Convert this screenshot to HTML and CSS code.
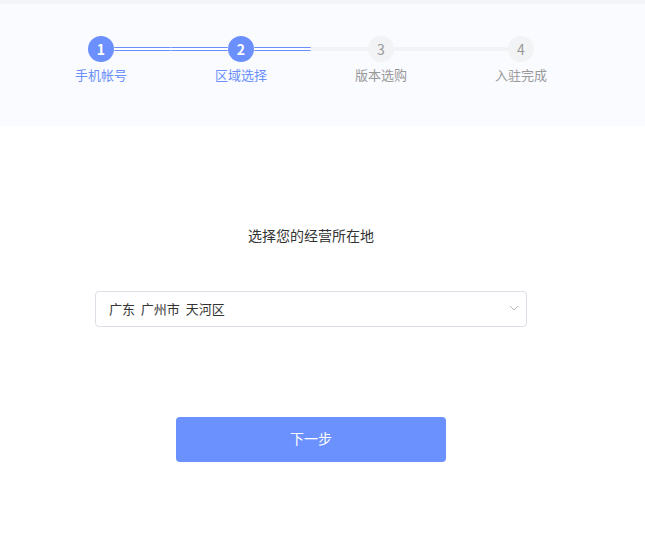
FILE: index.html
```html
<!DOCTYPE html>
<html lang="zh-CN">
<head>
    <meta charset="UTF-8">
    <meta name="viewport" content="width=device-width, initial-scale=1.0">
    <title>商家入驻</title>
    <link rel="stylesheet" href="styles.css">
</head>
<body>
    <header class="steps-bar">
        <div class="steps">
            <div class="step active">
                <div class="track"><span class="bar hidden"></span><span class="dot">1</span><span class="bar"></span></div>
                <div class="label">手机帐号</div>
            </div>
            <div class="step active">
                <div class="track"><span class="bar"></span><span class="dot">2</span><span class="bar"></span></div>
                <div class="label">区域选择</div>
            </div>
            <div class="step">
                <div class="track"><span class="bar"></span><span class="dot">3</span><span class="bar"></span></div>
                <div class="label">版本选购</div>
            </div>
            <div class="step">
                <div class="track"><span class="bar"></span><span class="dot">4</span><span class="bar hidden"></span></div>
                <div class="label">入驻完成</div>
            </div>
        </div>
    </header>

    <main class="content">
        <p class="title">选择您的经营所在地</p>
        <div class="select">
            <span class="select-value">广东&nbsp; 广州市&nbsp; 天河区</span>
            <svg class="arrow" width="10" height="6" viewBox="0 0 10 6">
                <path d="M1 1 L5 5 L9 1" fill="none" stroke="#b4b8c0" stroke-width="1"/>
            </svg>
        </div>
        <button class="btn-next">下一步</button>
    </main>
</body>
</html>
```

FILE: styles.css
```css
body {
    margin: 0;
    padding: 0;
    background: #fff;
    font-family: "Noto Sans CJK SC", "Noto Sans", sans-serif;
    color: #333;
}
.steps-bar {
    background: #f9fbff;
    border-top: 4px solid #f4f5f8;
    height: 126px;
    box-sizing: border-box;
    padding-top: 31px;
}
.steps {
    width: 622px;
    display: flex;
    justify-content: center;
}
.step {
    width: 140px;
    display: flex;
    flex-direction: column;
    align-items: center;
}
.track {
    width: 100%;
    height: 26px;
    display: flex;
    align-items: center;
    margin-top: 1px;
}
.bar {
    flex: 1;
    height: 4px;
    background: #f2f3f5;
}
.step.active .bar {
    background: #fff;
    border-top: 1px solid #6b8ffc;
    border-bottom: 1px solid #6b8ffc;
    height: 2px;
    border-radius: 1px;
}
.bar.hidden {
    visibility: hidden;
}
.dot {
    width: 26px;
    height: 26px;
    border-radius: 50%;
    background: #f2f3f5;
    color: #999;
    font-size: 14px;
    line-height: 26px;
    text-align: center;
}
.step.active .dot {
    background: #6b8ffc;
    color: #fff;
    font-weight: bold;
}
.label {
    margin-top: 4px;
    font-size: 13px;
    line-height: 18px;
    color: #999;
}
.step.active .label {
    color: #6b8ffc;
}
.content {
    width: 622px;
    display: flex;
    flex-direction: column;
    align-items: center;
}
.title {
    margin: 99px 0 0;
    font-size: 14px;
    line-height: 20px;
    color: #333;
}
.select {
    margin-top: 46px;
    width: 432px;
    height: 36px;
    box-sizing: border-box;
    border: 1px solid #dcdfe6;
    border-radius: 4px;
    padding: 0 7px 2px 13px;
    display: flex;
    align-items: center;
    justify-content: space-between;
    background: #fff;
}
.select-value {
    font-size: 13px;
    color: #333;
}
.btn-next {
    margin-top: 90px;
    width: 270px;
    height: 45px;
    border: none;
    border-radius: 4px;
    background: #6b91ff;
    color: #fff;
    font-family: inherit;
    font-size: 14px;
    padding: 0 0 3px;
    cursor: pointer;
}
```
